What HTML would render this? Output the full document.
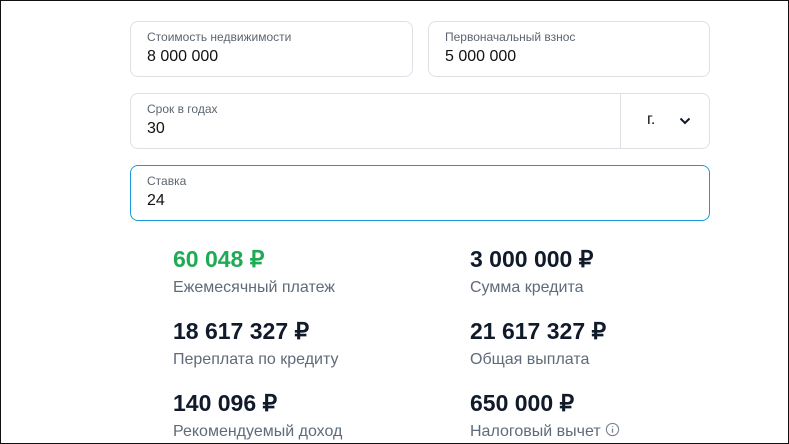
<!DOCTYPE html>
<html><head><meta charset="utf-8"><style>
*{box-sizing:border-box;margin:0;padding:0}
body{width:789px;height:444px;background:#fff;font-family:"Liberation Sans",Arial,sans-serif;position:relative;overflow:hidden;border:1px solid #111}
.box{position:absolute;border:1px solid #dde1e6;border-radius:8px;background:#fff}
.lab{position:absolute;left:16px;top:8px;font-size:12px;color:#5c6670}
.val{position:absolute;left:16px;top:26px;font-size:16px;color:#111}
.r{position:absolute}
.r .v{font-size:23px;font-weight:bold;color:#111a2a;line-height:26px}
.r .l{font-size:16px;color:#5f6b7a;line-height:20px;margin-top:6px}
</style></head><body>
<div class="box" style="left:129px;top:20px;width:283px;height:56px"><div class="lab">Стоимость недвижимости</div><div class="val">8 000 000</div></div>
<div class="box" style="left:427px;top:20px;width:282px;height:56px"><div class="lab">Первоначальный взнос</div><div class="val">5 000 000</div></div>
<div class="box" style="left:129px;top:92px;width:580px;height:56px"><div class="lab">Срок в годах</div><div class="val">30</div>
<div style="position:absolute;left:489px;top:0;bottom:0;border-left:1px solid #dde1e6"></div>
<div style="position:absolute;left:516px;top:17px;font-size:16px;color:#111">г.</div>
<svg style="position:absolute;left:548px;top:22px" width="12" height="10" viewBox="0 0 12 10"><path d="M1.5 2.5 6 7 10.5 2.5" fill="none" stroke="#111a2a" stroke-width="2"/></svg>
</div>
<div class="box" style="left:129px;top:164px;width:580px;height:56px;border-color:#1a9ad6"><div class="lab">Ставка</div><div class="val">24</div></div>
<div class="r" style="left:172px;top:245px"><div class="v" style="color:#1faa55">60 048 ₽</div><div class="l">Ежемесячный платеж</div></div>
<div class="r" style="left:469px;top:245px"><div class="v">3 000 000 ₽</div><div class="l">Сумма кредита</div></div>
<div class="r" style="left:172px;top:317px"><div class="v">18 617 327 ₽</div><div class="l">Переплата по кредиту</div></div>
<div class="r" style="left:469px;top:317px"><div class="v">21 617 327 ₽</div><div class="l">Общая выплата</div></div>
<div class="r" style="left:172px;top:389px"><div class="v">140 096 ₽</div><div class="l">Рекомендуемый доход</div></div>
<div class="r" style="left:469px;top:389px"><div class="v">650 000 ₽</div><div class="l">Налоговый вычет <svg width="15" height="15" viewBox="0 0 16 16" style="vertical-align:-1px"><circle cx="8" cy="8" r="6.5" fill="none" stroke="#7a8594" stroke-width="1.2"/><path d="M8 7v4.5M8 4.5v1" stroke="#7a8594" stroke-width="1.4"/></svg></div></div>
</body></html>
